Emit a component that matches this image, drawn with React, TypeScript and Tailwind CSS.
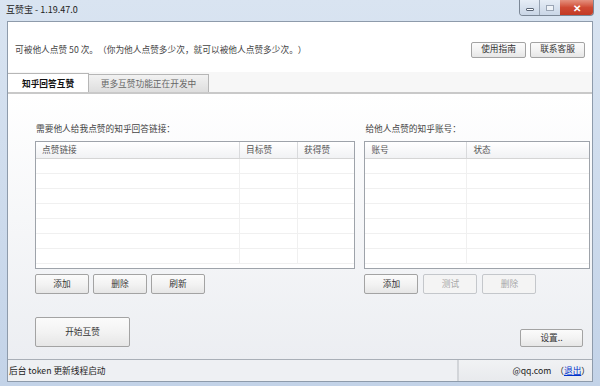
import React from "react";

const font = "font-['Noto_Sans_CJK_SC','Noto_Sans',sans-serif]";

function WinButton({
  label,
  className = "",
  disabled = false,
}: {
  label: string;
  className?: string;
  disabled?: boolean;
}) {
  return (
    <button
      type="button"
      disabled={disabled}
      className={`flex items-center justify-center rounded-[2px] border text-[8.7px] leading-none ${
        disabled
          ? "border-[#c4c7cb] bg-[#f4f4f4] text-[#a6a6a6]"
          : "border-[#a3a3a3] bg-gradient-to-b from-[#fbfbfb] via-[#f3f3f3] to-[#e6e6e6] text-[#333]"
      } ${className}`}
    >
      {label}
    </button>
  );
}

function ListView({
  columns,
  rows = 7,
}: {
  columns: { title: string; w: string }[];
  rows?: number;
}) {
  return (
    <div className="flex h-[128px] flex-col overflow-hidden border border-[#9ea3aa] bg-white">
      <div className="flex h-[17px] shrink-0 border-b border-[#d5d5d5] bg-gradient-to-b from-white to-[#f1f2f4]">
        {columns.map((c, i) => (
          <div
            key={c.title}
            className={`flex items-center px-[6px] text-[8.7px] text-[#555] ${c.w} ${
              i < columns.length - 1 ? "border-r border-[#d9dadc]" : ""
            }`}
          >
            {c.title}
          </div>
        ))}
      </div>
      {Array.from({ length: rows }).map((_, r) => (
        <div key={r} className="flex h-[15px] shrink-0 border-b border-[#f0f0f0]">
          {columns.map((c, i) => (
            <div
              key={c.title}
              className={`${c.w} ${i < columns.length - 1 ? "border-r border-[#f0f0f0]" : ""}`}
            />
          ))}
        </div>
      ))}
    </div>
  );
}

export default function App() {
  return (
    <div
      className={`${font} [text-spacing-trim:space-all] flex h-[386px] w-[600px] flex-col overflow-hidden bg-gradient-to-b from-[#d9e4f1] to-[#c3d3e8] text-[#333]`}
    >
      {/* title bar */}
      <div className="flex h-[21px] shrink-0 items-start justify-between">
        <div className="pl-[6px] pt-[5px] text-[9px] leading-none text-[#222]">
          互赞宝 - 1.19.47.0
        </div>
        <div className="mr-[6px] flex h-[16px] overflow-hidden rounded-b-[4px] border border-t-0 border-[#7b8796]">
          <div className="flex w-[20px] items-center justify-center border-r border-[#98a4b3] bg-gradient-to-b from-[#e6edf6] to-[#c9d6e6]">
            <div className="mt-[4px] h-[3px] w-[8px] rounded-[1px] border border-[#5b6676] bg-white" />
          </div>
          <div className="flex w-[20px] items-center justify-center bg-gradient-to-b from-[#e6edf6] to-[#c9d6e6]">
            <div className="h-[6px] w-[8px] border border-[#9aa5b4] bg-white/60" />
          </div>
          <div className="flex w-[33px] items-center justify-center bg-gradient-to-b from-[#e4907e] via-[#cf4a34] to-[#c23a24] text-[10px] font-bold leading-none text-white">
            ✕
          </div>
        </div>
      </div>

      {/* client area */}
      <div className="mx-[7px] mb-[4px] flex flex-1 flex-col border border-[#8e9bab] bg-white">
        {/* message row */}
        <div className="flex h-[50px] shrink-0 items-center justify-between pl-[7px] pr-[7px] pt-[5px]">
          <div className="text-[8.7px] text-[#444]">
            可被他人点赞 50 次。（你为他人点赞多少次，就可以被他人点赞多少次。）
          </div>
          <div className="flex gap-[4px]">
            <WinButton label="使用指南" className="h-[16px] w-[55px]" />
            <WinButton label="联系客服" className="h-[16px] w-[55px]" />
          </div>
        </div>

        {/* tabs */}
        <div className="flex h-[20px] shrink-0 items-end bg-[#f7f7f7]">
          <div className="-mb-[2px] flex h-[21px] w-[81px] items-center justify-center border-r border-t border-[#b6b6b6] bg-white text-[8.7px] font-bold text-[#111]">
            知乎回答互赞
          </div>
          <div className="flex h-[18px] w-[120px] items-center justify-center border border-b-0 border-l-0 border-[#b6b6b6] bg-gradient-to-b from-[#f2f2f2] to-[#dedede] text-[8.7px] text-[#666]">
            更多互赞功能正在开发中
          </div>
        </div>

        {/* tab panel */}
        <div className="flex flex-1 flex-col border-t-2 border-[#c9c9c9] bg-gradient-to-b from-white to-[#eceef2] pl-[27px] pr-[2px] pt-[28px]">
          <div className="flex gap-[9px]">
            <div className="flex w-[321px] flex-col">
              <div className="mb-[6px] h-[13px] pl-[1px] text-[8.7px] leading-[13px] text-[#444]">
                需要他人给我点赞的知乎回答链接：
              </div>
              <ListView
                columns={[
                  { title: "点赞链接", w: "w-[204px]" },
                  { title: "目标赞", w: "w-[58px]" },
                  { title: "获得赞", w: "flex-1" },
                ]}
              />
              <div className="mt-[5px] flex gap-[4px]">
                <WinButton label="添加" className="h-[20px] w-[54px]" />
                <WinButton label="删除" className="h-[20px] w-[54px]" />
                <WinButton label="刷新" className="h-[20px] w-[54px]" />
              </div>
            </div>
            <div className="flex w-[226px] flex-col">
              <div className="mb-[6px] h-[13px] pl-[1px] text-[8.7px] leading-[13px] text-[#444]">
                给他人点赞的知乎账号：
              </div>
              <ListView
                columns={[
                  { title: "账号", w: "w-[102px]" },
                  { title: "状态", w: "flex-1" },
                ]}
              />
              <div className="mt-[5px] flex gap-[5px]">
                <WinButton label="添加" className="h-[20px] w-[54px]" />
                <WinButton label="测试" disabled className="h-[20px] w-[54px]" />
                <WinButton label="删除" disabled className="h-[20px] w-[54px]" />
              </div>
            </div>
          </div>
          <div className="mt-[23px] flex items-end justify-between pr-[7px]">
            <WinButton label="开始互赞" className="h-[30px] w-[95px]" />
            <WinButton label="设置.." className="h-[18px] w-[63px]" />
          </div>
        </div>

        {/* status bar */}
        <div className="flex h-[22px] shrink-0 items-center border-t border-[#a9afb7] bg-[#eef0f3] text-[8.7px] text-[#222]">
          <div className="flex-1 pl-[1px]">后台 token 更新线程启动</div>
          <div className="flex h-full w-[135px] items-center justify-end border-l-2 border-[#d2d5d9] bg-gradient-to-b from-[#f1f2f4] to-[#e8eaed] pr-[2px]">
            <span>@qq.com</span>
            <span className="ml-[4px]">（</span>
            <span className="text-[#0033cc] underline">退出</span>
            <span>）</span>
          </div>
        </div>
      </div>
    </div>
  );
}
